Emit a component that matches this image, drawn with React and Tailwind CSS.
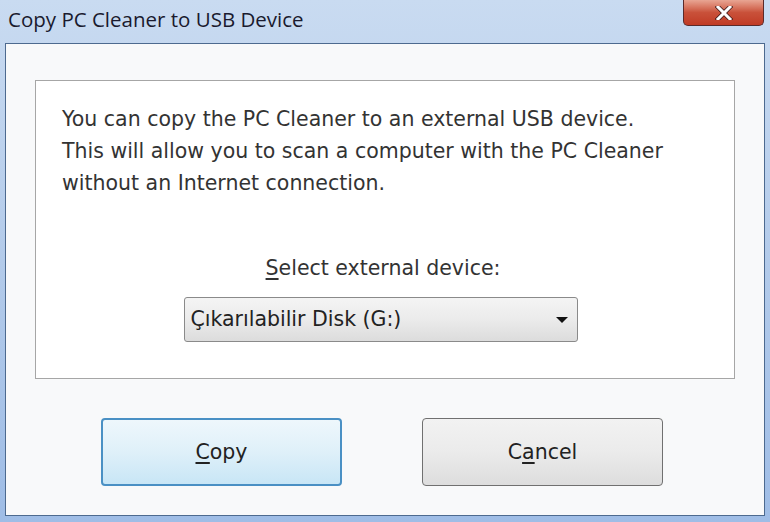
import React from 'react';

const font = { fontFamily: '"DejaVu Sans", Tahoma, sans-serif' };

export default function App() {
  return (
    <div className="w-[770px] h-[522px] overflow-hidden bg-gradient-to-b from-[#c9dbf1] via-[#b3cbea] to-[#9fbde6] flex flex-col">
      <div className="h-[43px] flex items-start justify-between shrink-0">
        <span className="pl-[8px] pt-[4px] text-[20.5px] text-[#1a1a2e]" style={{ fontFamily: '"Open Sans", "Noto Sans", sans-serif' }}>
          Copy PC Cleaner to USB Device
        </span>
        <div className="mr-[6px] w-[81px] h-[26px] rounded-b-[5px] border border-t-0 border-[#5a2a2a] bg-gradient-to-b from-[#e8a593] via-[#c9513a] to-[#c03a24] flex items-center justify-center">
          <svg width="18" height="14" viewBox="0 0 18 14">
            <path d="M3 1 L15 13 M15 1 L3 13" stroke="#3a1a1a" strokeWidth="4.5" strokeLinecap="square" />
            <path d="M3 1 L15 13 M15 1 L3 13" stroke="#ffffff" strokeWidth="3" strokeLinecap="square" />
          </svg>
        </div>
      </div>
      <div className="flex-1 mx-[5px] mb-[6px] border border-[#4d6a8f] bg-[#f8f9fa] flex flex-col">
        <div className="mt-[36px] mx-[29px] h-[299px] border border-[#a6a6a6] bg-white flex flex-col" style={font}>
          <p className="pl-[26px] pt-[22px] text-[20.5px] leading-[32px] text-[#333]">
            You can copy the PC Cleaner to an external USB device.
            <br />
            This will allow you to scan a computer with the PC Cleaner
            <br />
            without an Internet connection.
          </p>
          <div className="mt-[56px] flex flex-col items-center">
            <span className="text-[20.5px] leading-[26px] text-[#333] mr-[4px]">
              <span className="underline underline-offset-[3px]">S</span>elect external device:
            </span>
            <div className="mt-[16px] mr-[9px] w-[394px] h-[45px] rounded-[3px] border border-[#8a8a8a] bg-gradient-to-b from-[#f4f4f4] via-[#ebebeb] to-[#dcdcdc] flex items-center justify-between px-[6px]">
              <span className="text-[20.5px] text-[#222]">Çıkarılabilir Disk (G:)</span>
              <svg width="14" height="8" viewBox="0 0 14 8" className="mr-[2px]">
                <path d="M1 1 L13 1 L7 7 Z" fill="#111" />
              </svg>
            </div>
          </div>
        </div>
        <div className="mt-[39px] mr-[6px] flex justify-center gap-[80px]" style={font}>
          <button className="w-[241px] h-[68px] rounded-[4px] border-2 border-[#4a90c4] bg-gradient-to-b from-[#eef7fc] via-[#dff0f9] to-[#c8e6f6] text-[20.5px] text-[#222]">
            <span className="underline underline-offset-[3px]">C</span>opy
          </button>
          <button className="w-[241px] h-[68px] rounded-[4px] border border-[#707070] bg-gradient-to-b from-[#f2f2f2] via-[#ebebeb] to-[#dddddd] text-[20.5px] text-[#222]">
            C<span className="underline underline-offset-[3px]">a</span>ncel
          </button>
        </div>
      </div>
    </div>
  );
}
